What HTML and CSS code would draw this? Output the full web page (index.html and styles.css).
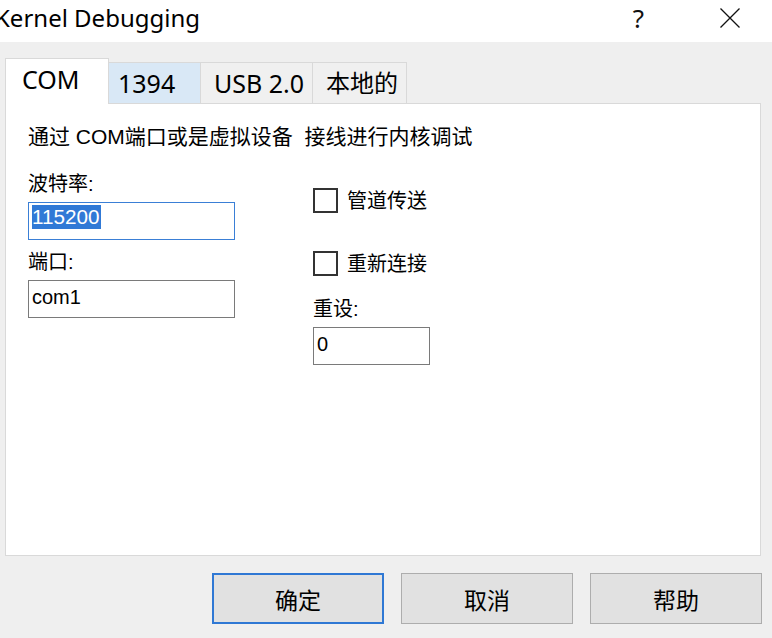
FILE: index.html
```html
<!DOCTYPE html>
<html lang="zh-CN">
<head>
<meta charset="utf-8">
<title>Kernel Debugging</title>
<link rel="stylesheet" href="styles.css">
</head>
<body>
<div class="window">
  <header class="titlebar">
    <div class="title">Kernel Debugging</div>
    <div class="caption-btns">
      <span class="help">?</span>
      <svg class="close" width="20" height="20" viewBox="0 0 20 20"><path d="M0.5 0.5 L19.5 19.5 M19.5 0.5 L0.5 19.5" stroke="#111" stroke-width="1.3" fill="none"/></svg>
    </div>
  </header>

  <div class="tabs">
    <div class="tab tab-com selected">COM</div>
    <div class="tab tab-1394 hover">1394</div>
    <div class="tab tab-usb">USB 2.0</div>
    <div class="tab tab-local">本地的</div>
  </div>

  <section class="panel">
    <p class="desc">通过 COM端口或是虚拟设备&nbsp; 接线进行内核调试</p>
    <div class="cols">
      <div class="col col-left">
        <label class="lbl lbl-first">波特率:</label>
        <div class="input focused"><span class="sel">115200</span></div>
        <label class="lbl lbl-second">端口:</label>
        <div class="input">com1</div>
      </div>
      <div class="col col-right">
        <div class="check check-first"><span class="box"></span><span class="check-lbl">管道传送</span></div>
        <div class="check check-second"><span class="box"></span><span class="check-lbl">重新连接</span></div>
        <label class="lbl lbl-reset">重设:</label>
        <div class="input input-small">0</div>
      </div>
    </div>
  </section>

  <footer class="buttons">
    <button class="btn default">确定</button>
    <button class="btn">取消</button>
    <button class="btn">帮助</button>
  </footer>
</div>
</body>
</html>
```

FILE: styles.css
```css
* { box-sizing: border-box; }

html, body {
  margin: 0;
  padding: 0;
  width: 772px;
  height: 638px;
  overflow: hidden;
  background: #efefef;
  font-family: "Liberation Sans", "Noto Sans CJK SC", sans-serif;
  color: #000;
}

.window {
  width: 772px;
  height: 638px;
}

.titlebar {
  height: 42px;
  background: #fff;
  display: flex;
  align-items: flex-start;
  justify-content: space-between;
}

.title {
  font-family: "Noto Sans", sans-serif;
  font-size: 24px;
  line-height: 36px;
  margin-left: -5px;
  color: #000;
}

.caption-btns {
  display: flex;
  align-items: flex-start;
  margin-right: 32px;
  gap: 76px;
}

.help {
  font-family: "Noto Sans", sans-serif;
  font-size: 26px;
  line-height: normal;
  margin-left: 1px;
  color: #111;
}

.close {
  display: block;
  margin-top: 8px;
}

.tabs {
  display: flex;
  align-items: flex-end;
  height: 45px;
  margin-top: 16px;
  margin-left: 5px;
}

.tab {
  height: 41px;
  border-top: 1px solid #d9d9d9;
  border-right: 1px solid #d9d9d9;
  background: #f0f0f0;
  font-family: "Noto Sans", "Noto Sans CJK SC", sans-serif;
  font-size: 25px;
  line-height: 34px;
  padding-top: 3px;
  padding-left: 13px;
  white-space: nowrap;
}

.tab.selected {
  height: 46px;
  margin-bottom: -1px;
  border-left: 1px solid #d9d9d9;
  background: #fff;
  position: relative;
  z-index: 1;
  padding-left: 16px;
}

.tab.hover {
  background: #d9e8f6;
  padding-left: 9px;
}

.tab-com { width: 104px; }
.tab-1394 { width: 92px; }
.tab-usb { width: 112px; }
.tab-local { width: 94px; font-size: 24px; }

.panel {
  margin-left: 5px;
  width: 756px;
  height: 453px;
  background: #fff;
  border: 1px solid #d9d9d9;
  padding-left: 22px;
}

.desc {
  margin: 21px 0 0 0;
  font-size: 21px;
  line-height: 24px;
  white-space: nowrap;
}

.cols {
  display: grid;
  grid-template-columns: 207px 117px;
  column-gap: 78px;
  margin-top: 23px;
}

.col {
  display: flex;
  flex-direction: column;
  align-items: flex-start;
}

.col-left { width: 207px; }

.lbl {
  font-size: 20px;
  line-height: 24px;
  display: block;
}

.lbl-first { margin-bottom: 6px; }
.lbl-second { margin-top: 10px; margin-bottom: 6px; }
.lbl-reset { margin-top: 21px; margin-bottom: 6px; }

.input {
  width: 207px;
  height: 38px;
  border: 1px solid #7a7a7a;
  background: #fff;
  font-size: 20px;
  line-height: 24px;
  padding: 4px 0 0 3px;
  white-space: nowrap;
}

.input.focused {
  border-color: #3a7fd6;
  padding: 2px 0 0 3px;
}

.sel {
  display: inline-block;
  background: #3079d6;
  color: #fff;
  height: 24px;
  line-height: 24px;
  padding: 0 1px 0 0;
  font-size: 20.7px;
}

.input-small {
  width: 117px;
}

.check {
  display: flex;
  align-items: center;
  height: 25px;
}

.check-first { margin-top: 16px; }
.check-second { margin-top: 38px; }

.box {
  width: 25px;
  height: 25px;
  border: 2px solid #333;
  background: #fff;
  flex: none;
}

.check-lbl {
  font-size: 20px;
  line-height: 24px;
  margin-left: 9px;
  white-space: nowrap;
}

.buttons {
  display: flex;
  justify-content: flex-end;
  gap: 17px;
  margin-top: 17px;
  padding-right: 10px;
}

.btn {
  width: 172px;
  height: 51px;
  background: #e1e1e1;
  border: 1px solid #adadad;
  font-family: "Noto Sans CJK SC", sans-serif;
  font-size: 23px;
  color: #000;
  padding: 0;
  margin: 0;
}

.btn.default {
  border: 2px solid #2f78d4;
}
```
